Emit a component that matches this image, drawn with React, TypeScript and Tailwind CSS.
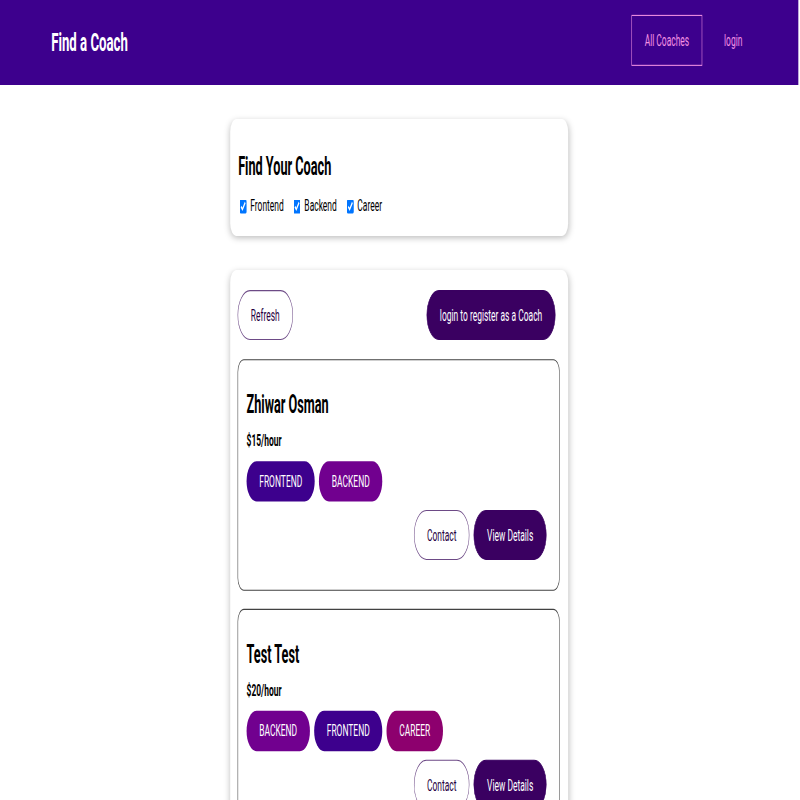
type Coach = {
  id: string;
  name: string;
  rate: number;
  areas: string[];
};

const coaches: Coach[] = [
  { id: "c1", name: "Zhiwar Osman", rate: 15, areas: ["frontend", "backend"] },
  { id: "c2", name: "Test Test", rate: 20, areas: ["backend", "frontend", "career"] },
];

const badgeColor: Record<string, string> = {
  frontend: "bg-[#3d008d]",
  backend: "bg-[#71008f]",
  career: "bg-[#8d006e]",
};

function Badge({ area }: { area: string }) {
  return (
    <span className={`inline-block rounded-[30px] px-6 py-2 leading-[22px] uppercase text-white ${badgeColor[area]}`}>
      {area}
    </span>
  );
}

function Button({ outline, children }: { outline?: boolean; children: React.ReactNode }) {
  return (
    <button
      className={
        outline
          ? "rounded-[30px] border border-[#6d4a86] bg-transparent px-6 py-3 leading-[21px] text-[#270041]"
          : "rounded-[30px] border border-[#3a0061] bg-[#3a0061] px-6 py-3 leading-[21px] text-white"
      }
    >
      {children}
    </button>
  );
}

function CoachItem({ coach }: { coach: Coach }) {
  return (
    <li className="rounded-xl border border-[#424242] px-4 pt-4 pb-[28px]">
      <h3 className="mt-2 text-2xl leading-9 font-bold">{coach.name}</h3>
      <h4 className="mt-1 leading-6 font-bold">${coach.rate}/hour</h4>
      <div className="mt-[7px] flex gap-2">
        {coach.areas.map((a) => (
          <Badge key={a} area={a} />
        ))}
      </div>
      <div className="mt-2 flex justify-end gap-2 pr-2">
        <Button outline>Contact</Button>
        <Button>View Details</Button>
      </div>
    </li>
  );
}

function Filter() {
  const opts = ["Frontend", "Backend", "Career"];
  return (
    <section className="mx-auto mt-8 max-w-[40rem] rounded-xl px-[15px] py-4 shadow-[0_2px_8px_rgba(0,0,0,0.26)]">
      <h2 className="mt-[11px] text-2xl leading-9 font-bold">Find Your Coach</h2>
      <div className="mt-[7px] flex h-6 items-center">
        {opts.map((o) => (
          <span key={o} className="mr-[16px] flex items-center">
            <input type="checkbox" defaultChecked className="ml-[3px] mr-[3px] h-[13px] w-[13px]" />
            <label className="ml-1">{o}</label>
          </span>
        ))}
      </div>
    </section>
  );
}

export default function App() {
  return (
    <div className="h-[800px] w-full overflow-hidden bg-white">
      <div className="w-[1512px] origin-top-left scale-x-[0.528] scale-y-[1.0625] font-['Roboto',sans-serif] text-base text-black">
        <header className="flex h-20 items-center justify-center bg-[#3d008d]">
          <nav className="flex w-[1366px] items-center justify-between">
            <h1>
              <a className="inline-block px-6 py-3 text-[25px] leading-normal font-bold text-white">Find a Coach</a>
            </h1>
            <ul className="mb-1 flex items-center">
              <li className="mx-2">
                <a className="inline-block border border-[#f391e3] px-6 py-3 leading-[22px] text-[#f391e3]">All Coaches</a>
              </li>
              <li className="mx-2">
                <a className="inline-block border border-transparent px-6 py-3 leading-[22px] text-[#f391e3]">login</a>
              </li>
            </ul>
          </nav>
        </header>
        <main>
          <Filter />
          <section className="mx-auto mt-8 max-w-[40rem] rounded-xl py-4 pr-4 pl-[14px] shadow-[0_2px_8px_rgba(0,0,0,0.26)]">
            <div className="mt-[3px] flex justify-between">
              <Button outline>Refresh</Button>
              <div className="mr-2">
                <Button>login to register as a Coach</Button>
              </div>
            </div>
            <ul className="mt-[18px] flex flex-col gap-[17px]">
              {coaches.map((c) => (
                <CoachItem key={c.id} coach={c} />
              ))}
            </ul>
          </section>
        </main>
      </div>
    </div>
  );
}
